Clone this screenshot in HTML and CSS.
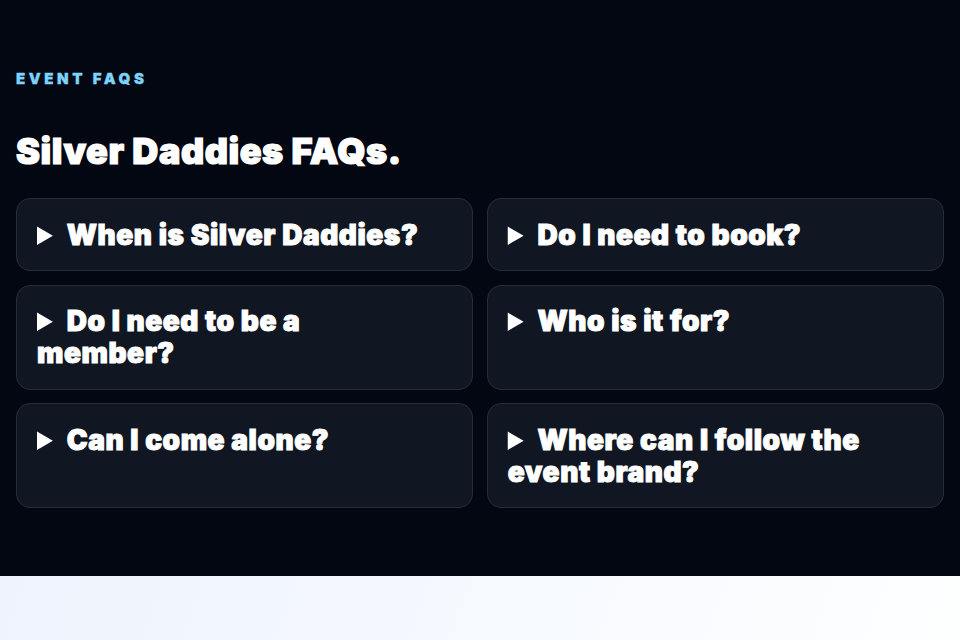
FILE: index.html
```html
<!DOCTYPE html>
<html lang="en">
<head>
    <meta charset="UTF-8">
    <meta name="viewport" content="width=device-width, initial-scale=1.0">
    <title>Silver Daddies FAQs</title>
    <link rel="stylesheet" href="styles.css">
</head>
<body>
    <section class="faq-section">
        <p class="eyebrow">Event FAQs</p>
        <h2 class="faq-title">Silver Daddies FAQs.</h2>
        <div class="faq-grid">
            <details class="faq-item"><summary>When is Silver Daddies?</summary></details>
            <details class="faq-item"><summary>Do I need to book?</summary></details>
            <details class="faq-item"><summary>Do I need to be a member?</summary></details>
            <details class="faq-item"><summary>Who is it for?</summary></details>
            <details class="faq-item"><summary>Can I come alone?</summary></details>
            <details class="faq-item"><summary>Where can I follow the event brand?</summary></details>
        </div>
    </section>
    <section class="next-section"></section>
</body>
</html>
```

FILE: styles.css
```css
body { margin: 0; font-family: Inter, "Noto Sans", sans-serif; background: #f8fafc; }
.faq-section { background: #030712; color: #fff; padding: 67px 16px 68px; }
.eyebrow { margin: 0; font-size: 15px; font-weight: 900; letter-spacing: 0.24em; text-transform: uppercase; color: #7dd3fc; line-height: 24px; -webkit-text-stroke: 0.3px #7dd3fc; }
.faq-title { margin: 40px 0 27px; font-size: 36px; font-weight: 900; line-height: 40px; letter-spacing: 0.015em; -webkit-text-stroke: 1.2px #fff; }
.faq-grid { display: grid; grid-template-columns: 1fr 1fr; gap: 13.5px; }
.faq-item { background: #111722; border: 1px solid #262c38; border-radius: 14px; padding: 19.5px 36px 19.5px 20px; }
.faq-item summary { font-size: 28px; font-weight: 900; line-height: 32px; letter-spacing: 0.02em; -webkit-text-stroke: 1px #fff; cursor: pointer; }
.next-section { height: 200px; background: linear-gradient(110deg, #eef3fd 0%, #f6f9fe 50%, #ffffff 100%); }
```
